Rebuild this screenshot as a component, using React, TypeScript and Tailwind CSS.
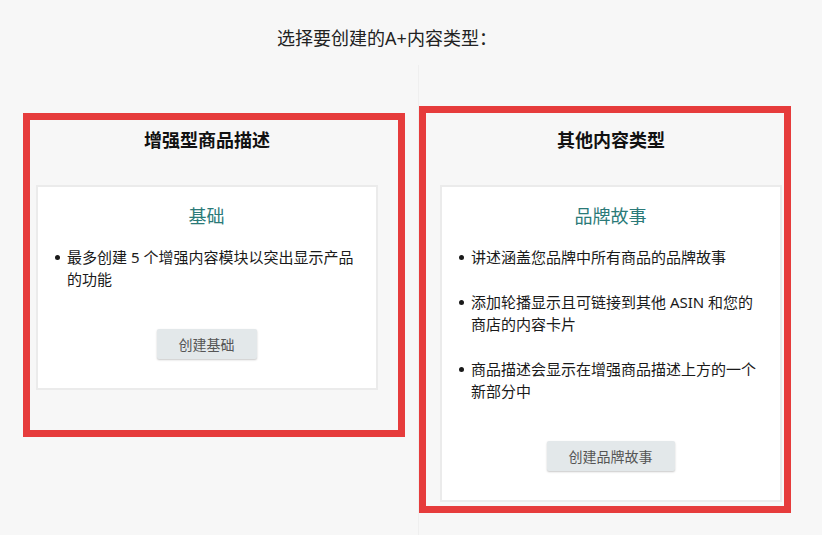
const COLUMNS = [
  {
    title: '增强型商品描述',
    heading: '基础',
    points: ['最多创建 5 个增强内容模块以突出显示产品的功能'],
    action: '创建基础',
  },
  {
    title: '其他内容类型',
    heading: '品牌故事',
    points: [
      '讲述涵盖您品牌中所有商品的品牌故事',
      '添加轮播显示且可链接到其他 ASIN 和您的商店的内容卡片',
      '商品描述会显示在增强商品描述上方的一个新部分中',
    ],
    action: '创建品牌故事',
  },
];

type Column = (typeof COLUMNS)[number];

const ContentColumn = ({ col }: { col: Column }) => (
  <div className="w-[342px] flex flex-col items-stretch">
    <h2 className="text-center text-[18px] leading-[24px] font-bold text-[#111]">{col.title}</h2>
    <div className="mt-[33px] bg-white border-2 border-[#ebebeb] pt-[17px] pb-[29px] pl-[17px] pr-[18px] flex flex-col">
      <h3 className="text-center text-[18px] leading-[24px] text-[#2b7a78]">{col.heading}</h3>
      <ul className="mt-[18px] flex flex-col gap-[23px]">
        {col.points.map(p => (
          <li key={p} className="flex items-start text-[15px] leading-[22px] text-[#1a1a1a]">
            <span className="mt-[9px] w-[5px] h-[5px] rounded-full bg-[#1a1a1a] shrink-0" />
            <span className="ml-[7px]">{p}</span>
          </li>
        ))}
      </ul>
      <div className="mt-[39px] flex justify-center">
        <button className="h-[30px] px-[22px] bg-[#e3e8ea] rounded-[2px] text-[14px] text-[#555] shadow-[0_1px_2px_rgba(0,0,0,0.22)]">
          {col.action}
        </button>
      </div>
    </div>
  </div>
);

export default function App() {
  return (
    <div className="relative w-[822px] h-[535px] overflow-hidden bg-[#f7f7f7] flex flex-col font-['Noto_Sans','Noto_Sans_CJK_SC',sans-serif]">
      <div className="pt-[26px] pr-[48px] text-center text-[18px] leading-[24px] text-[#222]">
        选择要创建的A+内容类型：
      </div>

      <div className="mt-[15px] flex-1 flex items-stretch">
        <div className="ml-[36px] mr-[40px] pt-[63px]">
          <ContentColumn col={COLUMNS[0]} />
        </div>
        <div className="w-px bg-[#efefef]" />
        <div className="ml-[21px] pt-[63px]">
          <ContentColumn col={COLUMNS[1]} />
        </div>
      </div>

      {/* red annotation boxes */}
      <div className="absolute left-[23px] top-[113px] w-[382px] h-[324px] border-[7px] border-[#e63c3c]" />
      <div className="absolute left-[419px] top-[106px] w-[372px] h-[407px] border-[7px] border-[#e63c3c]" />
    </div>
  );
}
